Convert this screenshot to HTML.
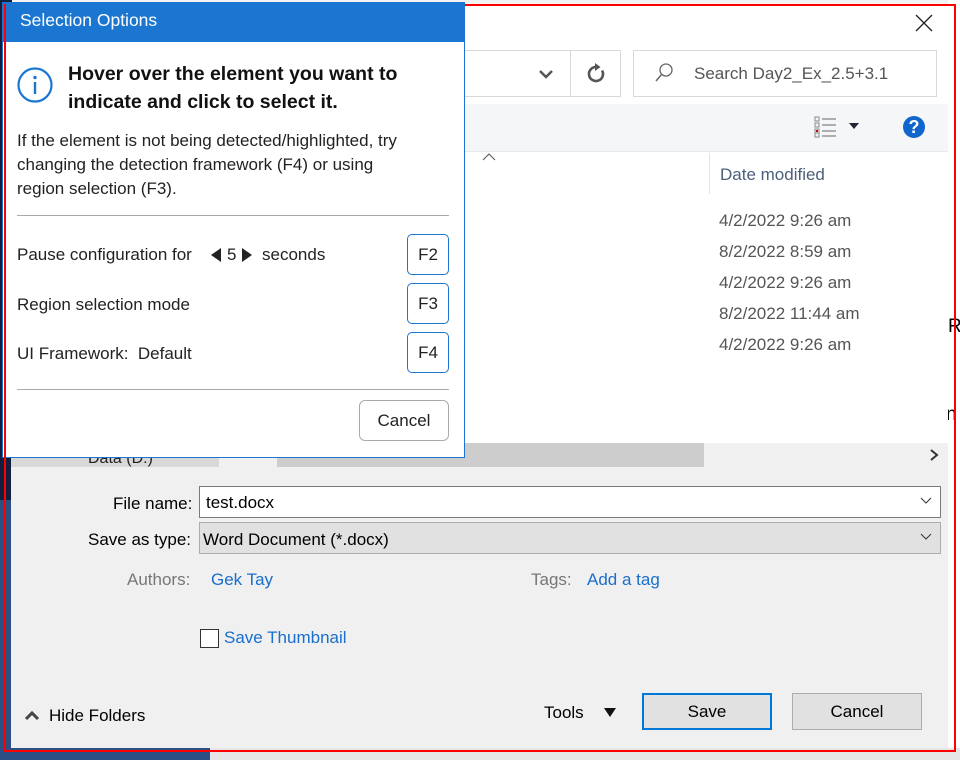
<!DOCTYPE html>
<html><head><meta charset="utf-8"><style>
*{box-sizing:border-box;margin:0;padding:0}
body{width:960px;height:760px;overflow:hidden;position:relative;background:#f3f3f3;font-family:"Liberation Sans",sans-serif;color:#000}
.a{position:absolute}
.t{position:absolute;white-space:nowrap}
</style></head><body>
<div class="a" style="left:0;top:0;width:12px;height:510px;background:#0f1f3d"></div>
<div class="a" style="left:0;top:500px;width:12px;height:260px;background:#2b5086"></div>
<div class="a" style="left:0;top:748px;width:210px;height:12px;background:#2b5086"></div>
<div class="a" style="left:210px;top:748px;width:750px;height:12px;background:#e6e6e6"></div>
<div class="a" style="left:948px;top:0;width:12px;height:748px;background:#fff;overflow:hidden">
<div class="t" style="left:0;top:316px;font-size:19px">R</div>
<div class="t" style="left:-2px;top:404px;font-size:19px">n</div>
</div>

<div class="a" style="left:11px;top:6px;width:937px;height:742px;background:#fff"></div>
<svg class="a" style="left:914px;top:13px" width="20" height="20"><path d="M2 2L18 18M18 2L2 18" stroke="#222" stroke-width="1.3"/></svg>
<div class="a" style="left:400px;top:50px;width:221px;height:47px;border:1px solid #d9d9d9;border-left:none"></div>
<div class="a" style="left:570px;top:50px;width:1px;height:47px;background:#d9d9d9"></div>
<svg class="a" style="left:538px;top:68px" width="16" height="12"><path d="M2 3L8 9L14 3" stroke="#555" stroke-width="2.5" fill="none"/></svg>
<svg class="a" style="left:585px;top:62px" width="22" height="22"><path d="M11 5A7 7 0 1 0 17.06 8.5" stroke="#555" stroke-width="2.6" fill="none"/><path d="M10 1L15.5 5L10 9Z" fill="#555"/></svg>
<div class="a" style="left:633px;top:50px;width:304px;height:47px;border:1px solid #d9d9d9"></div>
<svg class="a" style="left:653px;top:62px" width="22" height="22"><circle cx="13" cy="8" r="6" stroke="#666" stroke-width="1.3" fill="none"/><path d="M9 12L3 19" stroke="#666" stroke-width="1.5"/></svg>
<div class="t" style="left:694px;top:64px;font-size:17px;color:#555">Search Day2_Ex_2.5+3.1</div>
<div class="a" style="left:11px;top:104px;width:937px;height:48px;background:#f5f6f7;border-bottom:1px solid #e8e8e8"></div>
<svg class="a" style="left:814px;top:116px" width="24" height="22"><g fill="none" stroke="#888" stroke-width="1"><rect x="1" y="1" width="4" height="4"/><rect x="1" y="7" width="4" height="4"/><rect x="1" y="13" width="4" height="4"/><rect x="1" y="17" width="4" height="4"/></g><rect x="2" y="14" width="2" height="2" fill="#c00"/><path d="M8 3H22M8 9H22M8 15H22M8 20H22" stroke="#666" stroke-width="1"/></svg>
<svg class="a" style="left:849px;top:123px" width="10" height="6"><path d="M0 0H10L5 6Z" fill="#223"/></svg>
<div class="a" style="left:903px;top:116px;width:22px;height:22px;border-radius:50%;background:#1166cc;color:#fff;font-size:18px;font-weight:bold;text-align:center;line-height:22px">?</div>
<svg class="a" style="left:482px;top:153px" width="14" height="8"><path d="M1 7L7 1L13 7" stroke="#555" fill="none"/></svg>
<div class="a" style="left:709px;top:153px;width:1px;height:41px;background:#e5e5e5"></div>
<div class="t" style="left:720px;top:165px;font-size:17px;color:#4c607a">Date modified</div>
<div class="t" style="left:719px;top:211px;font-size:17px;color:#555">4/2/2022 9:26 am</div>
<div class="t" style="left:719px;top:242px;font-size:17px;color:#555">8/2/2022 8:59 am</div>
<div class="t" style="left:719px;top:273px;font-size:17px;color:#555">4/2/2022 9:26 am</div>
<div class="t" style="left:719px;top:304px;font-size:17px;color:#555">8/2/2022 11:44 am</div>
<div class="t" style="left:719px;top:335px;font-size:17px;color:#555">4/2/2022 9:26 am</div>
<div class="a" style="left:11px;top:443px;width:937px;height:24px;background:#f0f0f0"></div>
<div class="a" style="left:11px;top:443px;width:208px;height:24px;background:#d8d8d8"></div>
<div class="a" style="left:277px;top:443px;width:427px;height:24px;background:#cdcdcd"></div>
<div class="t" style="left:88px;top:450px;font-size:16px;color:#222">Data (D:)</div>
<svg class="a" style="left:928px;top:448px" width="12" height="14"><path d="M3 2L9 7L3 12" stroke="#333" stroke-width="2" fill="none"/></svg>
<div class="a" style="left:11px;top:467px;width:937px;height:281px;background:#f0f0f0"></div>
<div class="t" style="left:113px;top:494px;font-size:17px">File name:</div>
<div class="a" style="left:199px;top:486px;width:742px;height:32px;background:#fff;border:1px solid #7a7a7a"></div>
<div class="t" style="left:206px;top:493px;font-size:17px">test.docx</div>
<svg class="a" style="left:920px;top:497px" width="12" height="8"><path d="M1 1L6 6L11 1" stroke="#333" fill="none"/></svg>
<div class="t" style="left:88px;top:530px;font-size:17px">Save as type:</div>
<div class="a" style="left:199px;top:522px;width:742px;height:32px;background:#e1e1e1;border:1px solid #adadad"></div>
<div class="t" style="left:203px;top:530px;font-size:17px">Word Document (*.docx)</div>
<svg class="a" style="left:920px;top:533px" width="12" height="8"><path d="M1 1L6 6L11 1" stroke="#333" fill="none"/></svg>
<div class="t" style="left:127px;top:570px;font-size:17px;color:#777">Authors:</div>
<div class="t" style="left:211px;top:570px;font-size:17px;color:#1a6ecc">Gek Tay</div>
<div class="t" style="left:531px;top:570px;font-size:17px;color:#777">Tags:</div>
<div class="t" style="left:587px;top:570px;font-size:17px;color:#1a6ecc">Add a tag</div>
<div class="a" style="left:200px;top:629px;width:19px;height:19px;background:#fff;border:1px solid #333"></div>
<div class="t" style="left:224px;top:628px;font-size:17px;color:#1a6ecc">Save Thumbnail</div>
<svg class="a" style="left:24px;top:709px" width="16" height="12"><path d="M2 10L8 4L14 10" stroke="#444" stroke-width="3" fill="none"/></svg>
<div class="t" style="left:49px;top:706px;font-size:17px">Hide Folders</div>
<div class="t" style="left:544px;top:703px;font-size:17px">Tools</div>
<svg class="a" style="left:604px;top:708px" width="12" height="9"><path d="M0 0H12L6 9Z" fill="#111"/></svg>
<div class="a" style="left:642px;top:693px;width:130px;height:37px;background:#e1e1e1;border:2px solid #0078d7;font-size:17px;text-align:center;line-height:33px">Save</div>
<div class="a" style="left:792px;top:693px;width:130px;height:37px;background:#e1e1e1;border:1px solid #adadad;font-size:17px;text-align:center;line-height:35px">Cancel</div>

<div class="a" style="left:4px;top:4px;width:952px;height:748px;border:2px solid #f00"></div>

<div class="a" style="left:2px;top:2px;width:463px;height:456px;background:#fff;border:1px solid #1a76d2"></div>
<div class="a" style="left:2px;top:2px;width:463px;height:40px;background:#1b76d2"></div>
<div class="t" style="left:20px;top:10px;font-size:17.5px;color:#fff">Selection Options</div>
<div class="a" style="left:4px;top:4px;width:2px;height:454px;background:#f00"></div>
<svg class="a" style="left:16px;top:66px" width="38" height="38"><circle cx="19" cy="19" r="16.5" stroke="#1b76d2" stroke-width="2.2" fill="none"/><circle cx="19" cy="11.5" r="1.7" fill="#1b76d2"/><rect x="17.8" y="16" width="2.4" height="12" fill="#1b76d2"/></svg>
<div class="a" style="left:68px;top:60px;font-size:19.5px;font-weight:bold;line-height:28px;color:#111">Hover over the element you want to<br>indicate and click to select it.</div>
<div class="a" style="left:17px;top:129px;font-size:17px;line-height:24px;color:#222">If the element is not being detected/highlighted, try<br>changing the detection framework (F4) or using<br>region selection (F3).</div>
<div class="a" style="left:17px;top:215px;width:432px;height:1px;background:#aaa"></div>
<div class="t" style="left:17px;top:245px;font-size:17px;color:#222">Pause configuration for</div>
<svg class="a" style="left:211px;top:248px" width="12" height="14"><path d="M10 0V14L0 7Z" fill="#222"/></svg>
<div class="t" style="left:227px;top:245px;font-size:17px;color:#222">5</div>
<svg class="a" style="left:242px;top:248px" width="12" height="14"><path d="M0 0V14L10 7Z" fill="#222"/></svg>
<div class="t" style="left:262px;top:245px;font-size:17px;color:#222">seconds</div>
<div class="t" style="left:17px;top:295px;font-size:17px;color:#222">Region selection mode</div>
<div class="t" style="left:17px;top:344px;font-size:17px;color:#222">UI Framework:&nbsp; Default</div>
<div class="a" style="left:407px;top:234px;width:42px;height:41px;border:1px solid #1b76d2;border-radius:5px;font-size:17px;text-align:center;line-height:39px;color:#222">F2</div>
<div class="a" style="left:407px;top:283px;width:42px;height:41px;border:1px solid #1b76d2;border-radius:5px;font-size:17px;text-align:center;line-height:39px;color:#222">F3</div>
<div class="a" style="left:407px;top:332px;width:42px;height:41px;border:1px solid #1b76d2;border-radius:5px;font-size:17px;text-align:center;line-height:39px;color:#222">F4</div>
<div class="a" style="left:17px;top:389px;width:432px;height:1px;background:#aaa"></div>
<div class="a" style="left:359px;top:400px;width:90px;height:41px;border:1px solid #aaa;border-radius:6px;font-size:17px;text-align:center;line-height:39px;color:#222">Cancel</div>
</body></html>
